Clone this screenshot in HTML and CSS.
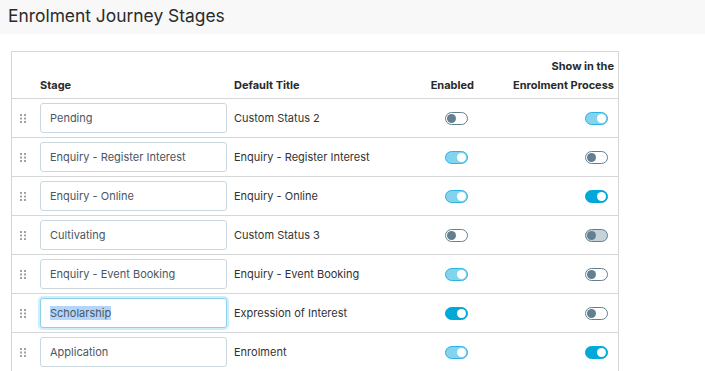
FILE: index.html
```html
<!DOCTYPE html>
<html lang="en">
<head>
<meta charset="UTF-8">
<title>Enrolment Journey Stages</title>
<link rel="stylesheet" href="styles.css">
</head>
<body>

<div class="page-header">
  <h1>Enrolment Journey Stages</h1>
</div>

<div class="stages-table">

  <!-- HEADER -->
  <div class="row head">
    <div class="cell"></div>
    <div class="cell">Stage</div>
    <div class="cell">Default Title</div>
    <div class="cell right">Enabled</div>
    <div class="cell right">Show in the<br>Enrolment Process</div>
  </div>

  <!-- ROWS -->
  <div class="row">
    <div class="cell handle"><svg width="6" height="9" viewBox="0 0 6 9"><g fill="#a3a3a3"><rect x="0" y="0" width="2" height="2"/><rect x="4" y="0" width="2" height="2"/><rect x="0" y="3.5" width="2" height="2"/><rect x="4" y="3.5" width="2" height="2"/><rect x="0" y="7" width="2" height="2"/><rect x="4" y="7" width="2" height="2"/></g></svg></div>
    <div class="cell"><input class="stage-input" value="Pending"></div>
    <div class="cell">Custom Status 2</div>
    <div class="cell right"><span class="toggle off"></span></div>
    <div class="cell right"><span class="toggle on-light"></span></div>
  </div>

  <div class="row">
    <div class="cell handle"><svg width="6" height="9" viewBox="0 0 6 9"><g fill="#a3a3a3"><rect x="0" y="0" width="2" height="2"/><rect x="4" y="0" width="2" height="2"/><rect x="0" y="3.5" width="2" height="2"/><rect x="4" y="3.5" width="2" height="2"/><rect x="0" y="7" width="2" height="2"/><rect x="4" y="7" width="2" height="2"/></g></svg></div>
    <div class="cell"><input class="stage-input" value="Enquiry - Register Interest"></div>
    <div class="cell">Enquiry - Register Interest</div>
    <div class="cell right"><span class="toggle on-light"></span></div>
    <div class="cell right"><span class="toggle off"></span></div>
  </div>

  <div class="row">
    <div class="cell handle"><svg width="6" height="9" viewBox="0 0 6 9"><g fill="#a3a3a3"><rect x="0" y="0" width="2" height="2"/><rect x="4" y="0" width="2" height="2"/><rect x="0" y="3.5" width="2" height="2"/><rect x="4" y="3.5" width="2" height="2"/><rect x="0" y="7" width="2" height="2"/><rect x="4" y="7" width="2" height="2"/></g></svg></div>
    <div class="cell"><input class="stage-input" value="Enquiry - Online"></div>
    <div class="cell">Enquiry - Online</div>
    <div class="cell right"><span class="toggle on-light"></span></div>
    <div class="cell right"><span class="toggle on"></span></div>
  </div>

  <div class="row">
    <div class="cell handle"><svg width="6" height="9" viewBox="0 0 6 9"><g fill="#a3a3a3"><rect x="0" y="0" width="2" height="2"/><rect x="4" y="0" width="2" height="2"/><rect x="0" y="3.5" width="2" height="2"/><rect x="4" y="3.5" width="2" height="2"/><rect x="0" y="7" width="2" height="2"/><rect x="4" y="7" width="2" height="2"/></g></svg></div>
    <div class="cell"><input class="stage-input" value="Cultivating"></div>
    <div class="cell">Custom Status 3</div>
    <div class="cell right"><span class="toggle off"></span></div>
    <div class="cell right"><span class="toggle off-disabled"></span></div>
  </div>

  <div class="row">
    <div class="cell handle"><svg width="6" height="9" viewBox="0 0 6 9"><g fill="#a3a3a3"><rect x="0" y="0" width="2" height="2"/><rect x="4" y="0" width="2" height="2"/><rect x="0" y="3.5" width="2" height="2"/><rect x="4" y="3.5" width="2" height="2"/><rect x="0" y="7" width="2" height="2"/><rect x="4" y="7" width="2" height="2"/></g></svg></div>
    <div class="cell"><input class="stage-input" value="Enquiry - Event Booking"></div>
    <div class="cell">Enquiry - Event Booking</div>
    <div class="cell right"><span class="toggle on-light"></span></div>
    <div class="cell right"><span class="toggle off"></span></div>
  </div>

  <div class="row">
    <div class="cell handle"><svg width="6" height="9" viewBox="0 0 6 9"><g fill="#a3a3a3"><rect x="0" y="0" width="2" height="2"/><rect x="4" y="0" width="2" height="2"/><rect x="0" y="3.5" width="2" height="2"/><rect x="4" y="3.5" width="2" height="2"/><rect x="0" y="7" width="2" height="2"/><rect x="4" y="7" width="2" height="2"/></g></svg></div>
    <div class="cell"><div class="stage-input focused"><span class="selected">Scholarship</span></div></div>
    <div class="cell">Expression of Interest</div>
    <div class="cell right"><span class="toggle on"></span></div>
    <div class="cell right"><span class="toggle off"></span></div>
  </div>

  <div class="row">
    <div class="cell handle"><svg width="6" height="9" viewBox="0 0 6 9"><g fill="#a3a3a3"><rect x="0" y="0" width="2" height="2"/><rect x="4" y="0" width="2" height="2"/><rect x="0" y="3.5" width="2" height="2"/><rect x="4" y="3.5" width="2" height="2"/><rect x="0" y="7" width="2" height="2"/><rect x="4" y="7" width="2" height="2"/></g></svg></div>
    <div class="cell"><input class="stage-input" value="Application"></div>
    <div class="cell">Enrolment</div>
    <div class="cell right"><span class="toggle on-light"></span></div>
    <div class="cell right"><span class="toggle on"></span></div>
  </div>

</div>

</body>
</html>
```

FILE: styles.css
```css
* { box-sizing: border-box; }
body {
  margin: 0;
  background: #fff;
  font-family: Inter, "Noto Sans", Arial, sans-serif;
  color: #333;
}

/* HEADER */
.page-header {
  height: 34px;
  background: #f8f8f8;
  padding-left: 8px;
}
.page-header h1 {
  margin: 0;
  font-size: 17.4px;
  font-weight: 400;
  line-height: 32px;
  color: #2b2b2b;
}

/* TABLE */
.stages-table {
  width: 608px;
  margin: 17px 0 0 11px;
  border: 1px solid #d6d6d6;
  border-bottom: none;
}

.row {
  display: grid;
  grid-template-columns: 28px 194px minmax(0, 1fr) 97px 140px;
  height: 39px;
  border-bottom: 1px solid #d6d6d6;
  align-items: center;
  font-size: 11px;
}

.row.head {
  height: 47px;
  align-items: end;
  font-weight: 700;
  line-height: 19px;
  padding-bottom: 3px;
  color: #2a2a2a;
}

.cell { padding-right: 4px; white-space: nowrap; }
.cell.right { text-align: right; }

.handle {
  display: flex;
  justify-content: center;
  margin-left: -2px;
}
.handle svg { display: block; }

.stage-input {
  display: block;
  width: 187px;
  height: 30px;
  padding: 0 9px;
  border: 1px solid #cbd7df;
  border-radius: 3px;
  font-family: inherit;
  font-size: 11px;
  color: #4b5661;
  background: #fff;
  outline: none;
  line-height: 28px;
}
.stage-input.focused {
  border-color: #8fd0ea;
  box-shadow: 0 0 0 2px #cdeefa;
}
.selected { background: #b4d5fb; }

/* TOGGLES */
.toggle {
  position: relative;
  display: inline-block;
  vertical-align: middle;
  width: 23px;
  height: 13px;
  margin-right: 6px;
  border-radius: 7px;
  border: 1.5px solid #62808f;
  background: #fff;
}
.toggle::after {
  content: "";
  position: absolute;
  top: 0.5px;
  left: 1px;
  width: 9px;
  height: 9px;
  border-radius: 50%;
  background: #62808f;
}
.toggle.off-disabled { background: #c4d2d9; }
.toggle.on-light { background: #82d4ee; border-color: #2cb3df; }
.toggle.on { background: #02a8d8; border-color: #02a8d8; }
.toggle.on-light::after,
.toggle.on::after { left: auto; right: 1px; background: #fff; }
```
